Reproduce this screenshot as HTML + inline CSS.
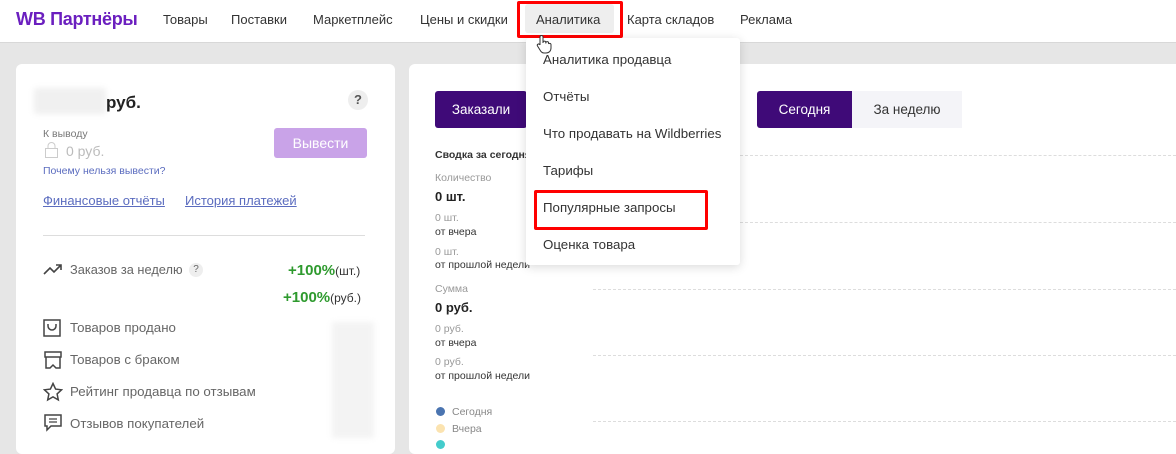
<!DOCTYPE html>
<html><head><meta charset="utf-8"><style>
*{margin:0;padding:0;box-sizing:border-box}
body{width:1176px;height:443px;overflow:hidden;background:#e6e6e6;font-family:"Liberation Sans",sans-serif;position:relative;color:#333}
.a{position:absolute;white-space:nowrap}
.hdr{position:absolute;left:0;top:0;width:1176px;height:43px;background:#fff;border-bottom:1px solid #d8d8d8}
.nav{font-size:13px;color:#333;top:12px}
.card{position:absolute;background:#fff;border-radius:6px}
.s{font-size:10.5px;color:#999}
.d{font-size:10.5px;color:#333}
.dash{position:absolute;height:0;border-top:1px dashed #ddd}
.dd{position:absolute;left:526px;top:38px;width:214px;height:227px;background:#fff;box-shadow:0 2px 10px rgba(0,0,0,.15);border-radius:3px}
.dd div{position:absolute;left:17px;font-size:13.3px;color:#333}
.red{position:absolute;border:3px solid #f00;border-radius:2px}
.lab{font-size:13.3px;color:#666;left:70px}
.blur{position:absolute;background:#eee;filter:blur(3px)}
</style></head><body>
<div class="hdr"></div>
<div class="a" style="left:16px;top:9px;font-size:18px;font-weight:bold;color:#6b1fbf;letter-spacing:-.3px">WB Партнёры</div>
<div class="a nav" style="left:163px">Товары</div>
<div class="a nav" style="left:231px">Поставки</div>
<div class="a nav" style="left:313px">Маркетплейс</div>
<div class="a nav" style="left:420px">Цены и скидки</div>
<div class="a" style="left:525px;top:4px;width:89px;height:29px;background:#eee;border-radius:3px"></div>
<div class="a nav" style="left:536px">Аналитика</div>
<div class="a nav" style="left:627px">Карта складов</div>
<div class="a nav" style="left:740px">Реклама</div>
<div class="red" style="left:517px;top:1px;width:106px;height:37px"></div>

<div class="card" style="left:16px;top:64px;width:379px;height:390px"></div>
<div class="blur" style="left:34px;top:88px;width:72px;height:26px;background:#f0f0f0"></div>
<div class="a" style="left:106px;top:93px;font-size:17px;font-weight:bold;color:#222">руб.</div>
<div class="a" style="left:348px;top:90px;width:20px;height:20px;border-radius:50%;background:#eee;font-size:13px;font-weight:bold;text-align:center;line-height:20px;color:#555">?</div>
<div class="a s" style="left:43px;top:128px;color:#777">К выводу</div>
<svg class="a" style="left:44px;top:141px" width="16" height="18"><rect x="1.5" y="7.5" width="12" height="9" fill="none" stroke="#ccc"/><path d="M4 7.5V5a3.5 3.5 0 0 1 7 0v2.5" fill="none" stroke="#ccc"/></svg>
<div class="a" style="left:66px;top:143px;font-size:14px;color:#bbb">0 руб.</div>
<div class="a" style="left:274px;top:128px;width:93px;height:30px;background:#c9a3e8;border-radius:3px;color:#fff;font-size:14px;text-align:center;line-height:30px">Вывести</div>
<div class="a" style="left:43px;top:165px;font-size:10.5px;color:#5b6cbf">Почему нельзя вывести?</div>
<div class="a" style="left:43px;top:193px;font-size:13px;color:#5b6cbf;text-decoration:underline">Финансовые отчёты</div>
<div class="a" style="left:185px;top:193px;font-size:13px;color:#5b6cbf;text-decoration:underline">История платежей</div>
<div class="a" style="left:43px;top:235px;width:322px;height:1px;background:#ddd"></div>
<svg class="a" style="left:43px;top:262px" width="20" height="14"><path d="M1 12l6-6 4 4 7-7M13 3h5v5" fill="none" stroke="#444" stroke-width="1.6"/></svg>
<div class="a lab" style="top:262px;font-size:12.8px">Заказов за неделю</div>
<div class="a" style="left:189px;top:263px;width:14px;height:14px;border-radius:50%;background:#eee;font-size:10px;text-align:center;line-height:14px;color:#666">?</div>
<div class="a" style="left:288px;top:262px;font-size:15px;font-weight:bold;color:#2e9a2e">+100%<span style="font-size:12px;font-weight:normal;color:#333">(шт.)</span></div>
<div class="a" style="left:283px;top:289px;font-size:15px;font-weight:bold;color:#2e9a2e">+100%<span style="font-size:12px;font-weight:normal;color:#333">(руб.)</span></div>
<svg class="a" style="left:43px;top:319px" width="18" height="18"><rect x="1" y="1" width="16" height="16" fill="none" stroke="#444" stroke-width="1.5"/><path d="M5 5v2a4 4 0 0 0 8 0V5" fill="none" stroke="#444" stroke-width="1.5"/></svg>
<div class="a lab" style="top:320px">Товаров продано</div>
<svg class="a" style="left:43px;top:350px" width="20" height="20"><path d="M2 2h16v5H2zM3 7v11h4l3-3 3 3h4V7" fill="none" stroke="#444" stroke-width="1.5"/></svg>
<div class="a lab" style="top:352px">Товаров с браком</div>
<svg class="a" style="left:43px;top:382px" width="20" height="20"><path d="M10 1.5l2.6 5.6 6 .7-4.5 4.1 1.2 6-5.3-3-5.3 3 1.2-6-4.5-4.1 6-.7z" fill="none" stroke="#444" stroke-width="1.5"/></svg>
<div class="a lab" style="top:384px">Рейтинг продавца по отзывам</div>
<svg class="a" style="left:44px;top:414px" width="18" height="19"><path d="M1 1h16v11H7l-4 4v-4H1z" fill="none" stroke="#444" stroke-width="1.5"/><path d="M5 5h8M5 8h8" stroke="#444" stroke-width="1.3"/></svg>
<div class="a lab" style="top:416px">Отзывов покупателей</div>
<div class="blur" style="left:332px;top:322px;width:42px;height:116px;background:#f3f3f3"></div>

<div class="card" style="left:409px;top:64px;width:780px;height:390px"></div>
<div class="a" style="left:435px;top:91px;width:92px;height:37px;background:#3f0a78;border-radius:3px;color:#fff;font-size:13.5px;text-align:center;line-height:37px">Заказали</div>
<div class="a" style="left:852px;top:91px;width:110px;height:37px;background:#f4f4f8;color:#333;font-size:13.5px;text-align:center;line-height:37px">За неделю</div>
<div class="a" style="left:757px;top:91px;width:95px;height:37px;background:#3f0a78;border-radius:3px 0 0 3px;color:#fff;font-size:13.5px;text-align:center;line-height:37px">Сегодня</div>
<div class="a d" style="left:435px;top:149px;font-weight:bold">Сводка за сегодня</div>
<div class="a s" style="left:435px;top:172px">Количество</div>
<div class="a" style="left:435px;top:189px;font-size:13px;font-weight:bold;color:#222">0 шт.</div>
<div class="a s" style="left:435px;top:212px">0 шт.</div>
<div class="a d" style="left:435px;top:226px">от вчера</div>
<div class="a s" style="left:435px;top:246px">0 шт.</div>
<div class="a d" style="left:435px;top:259px">от прошлой недели</div>
<div class="a s" style="left:435px;top:283px">Сумма</div>
<div class="a" style="left:435px;top:300px;font-size:13px;font-weight:bold;color:#222">0 руб.</div>
<div class="a s" style="left:435px;top:323px">0 руб.</div>
<div class="a d" style="left:435px;top:337px">от вчера</div>
<div class="a s" style="left:435px;top:356px">0 руб.</div>
<div class="a d" style="left:435px;top:370px">от прошлой недели</div>
<div class="a" style="left:436px;top:407px;width:9px;height:9px;border-radius:50%;background:#4a74b0"></div>
<div class="a s" style="left:452px;top:406px;color:#888">Сегодня</div>
<div class="a" style="left:436px;top:424px;width:9px;height:9px;border-radius:50%;background:#fbe3b0"></div>
<div class="a s" style="left:452px;top:423px;color:#888">Вчера</div>
<div class="a" style="left:436px;top:440px;width:9px;height:9px;border-radius:50%;background:#4cc"></div>
<div class="dash" style="left:740px;top:155px;width:436px"></div>
<div class="dash" style="left:740px;top:222px;width:436px"></div>
<div class="dash" style="left:593px;top:289px;width:583px"></div>
<div class="dash" style="left:593px;top:355px;width:583px"></div>
<div class="dash" style="left:593px;top:421px;width:583px"></div>

<div class="dd">
<div style="top:14px">Аналитика продавца</div>
<div style="top:51px">Отчёты</div>
<div style="top:88px">Что продавать на Wildberries</div>
<div style="top:125px">Тарифы</div>
<div style="top:162px">Популярные запросы</div>
<div style="top:199px">Оценка товара</div>
</div>
<div class="red" style="left:534px;top:190px;width:174px;height:40px"></div>
<svg class="a" style="left:536px;top:34px" width="16" height="20"><path d="M4 11V3a1.5 1.5 0 0 1 3 0v6M7 8.5a1.4 1.4 0 0 1 2.8 0v1M9.8 9a1.4 1.4 0 0 1 2.8 0v1M12.6 10a1.3 1.3 0 0 1 2.4.5V14c0 3-2 5-5 5H8c-2 0-3-1-4-3l-2.5-4a1.3 1.3 0 0 1 2.2-1.4L4 11" fill="#fff" stroke="#333" stroke-width="1"/></svg>
</body></html>
